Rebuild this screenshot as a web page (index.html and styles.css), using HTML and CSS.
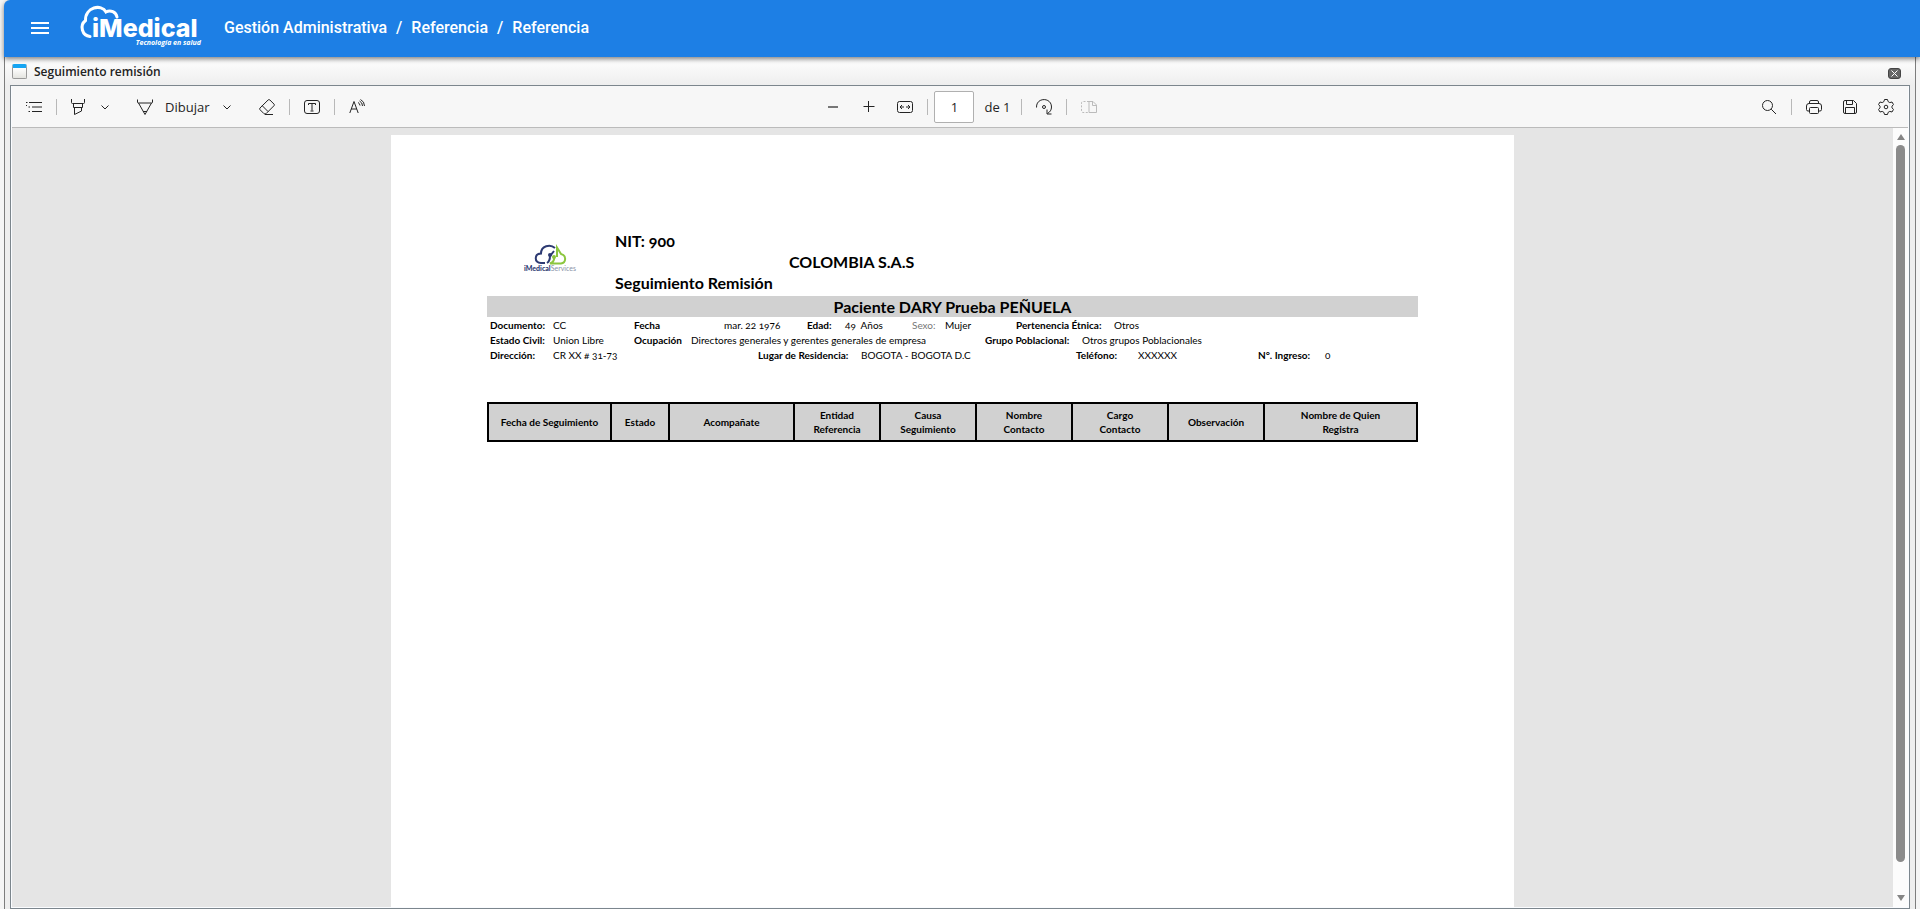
FILE: index.html
```html
<!DOCTYPE html>
<html lang="es">
<head>
<meta charset="utf-8">
<title>iMedical - Referencia</title>
<link rel="stylesheet" href="styles.css">
</head>
<body>
<header class="header">
<button class="menu" aria-label="Menú"><svg width="18" height="12" viewBox="0 0 18 12"><path d="M0 1h18M0 6h18M0 11h18"/></svg></button>
<a class="logo" href="#" aria-label="iMedical">
<svg width="122" height="33" viewBox="0 0 122 33">
<path class="cloud" d="M11 31.500A9 9 0 0 1 6.500 15.500C6 2 22.500-1.500 27 7C31.500 4.500 37 7 38 12"/>
<text class="logo-name" x="13" y="32">iMedical</text>
</svg>
<span class="logo-tag">Tecnología en salud</span>
</a>
<nav class="crumbs"><a href="#">Gestión Administrativa</a><span>/</span><a href="#">Referencia</a><span>/</span><a href="#">Referencia</a></nav>
</header>
<main class="window">
<div class="titlebar">
<span class="win-icon"></span>
<h1>Seguimiento remisión</h1>
<button class="close" aria-label="Cerrar"><svg width="7" height="7" viewBox="0 0 7 7"><path d="M.5.500l6 6M6.500.500l-6 6"/></svg></button>
</div>
<div class="viewer">
<div class="toolbar">
<div class="tools">
<button aria-label="Contenido"><svg width="16" height="16" viewBox="0 0 16 16"><path d="M3 3.500h13M6 8h10M6 12.500h10"/><path class="dots" d="M0 3.500h1.500M2.500 8H4M2.500 12.500H4M0 6.500h1"/></svg></button>
<i class="sep"></i>
<button aria-label="Resaltar"><svg width="16" height="16" viewBox="0 0 16 16"><path d="M.5 0v3.500q0 1 1 1h11q1 0 1-1V0M2.500 4.500v4h9v-4M3.500 8.500V15.500l7-3.500V8.500"/></svg></button>
<button aria-label="Opciones de resaltado"><svg width="8" height="16" viewBox="0 0 8 16"><path d="M.5 6.500L4 10l3.500-3.500"/></svg></button>
<button class="draw"><svg width="16" height="16" viewBox="0 0 16 16"><path d="M.5.500v2.500q0 1 1 1h13q1 0 1-1V.5M1.500 4L8 15.500 14.500 4M6 12.500h4"/></svg><span>Dibujar</span></button>
<button aria-label="Opciones de dibujo"><svg width="8" height="16" viewBox="0 0 8 16"><path d="M.5 6.500L4 10l3.500-3.500"/></svg></button>
<button class="eraser" aria-label="Borrar"><svg width="16" height="16" viewBox="0 0 16 16"><path d="M1 9L9.200.900q.8-.7 1.600 0l4.200 4.200q.8.800 0 1.600L7 14.700q-1 .8-2 0L1 10.700q-.8-.8 0-1.700zM3.300 6.800l5.800 5.800M6 15.500h8"/></svg></button>
<i class="sep"></i>
<button aria-label="Agregar texto"><svg width="16" height="16" viewBox="0 0 16 16"><rect x=".5" y="1.500" width="15" height="13" rx="2.500"/><path d="M4.500 6V4.500h7V6M8 4.500v7M6.500 12h3"/></svg></button>
<i class="sep"></i>
<button aria-label="Leer en voz alta"><svg width="16" height="16" viewBox="0 0 16 16"><path d="M.8 14L5 2.500 9.200 14M2.200 10h5.600M9 3.500q1.800.8 2 3M10.500 2q3 1.500 3 5M11.500.500q4 2 4 6.500"/></svg></button>
</div>
<div class="pages">
<button aria-label="Alejar"><svg width="16" height="16" viewBox="0 0 16 16"><path class="minus" d="M3 8h10"/></svg></button>
<button class="zoom" aria-label="Acercar"><svg width="16" height="16" viewBox="0 0 16 16"><path d="M2.500 7.500h11M7.500 2v11"/></svg></button>
<button class="zoom" aria-label="Ajustar al ancho"><svg width="16" height="16" viewBox="0 0 16 16"><rect x=".5" y="2.500" width="15" height="11" rx="2"/><path d="M3 8h4M9 8h4M5 6L3 8l2 2M11 6l2 2-2 2"/></svg></button>
<i class="sep"></i>
<input class="page-num" id="page" type="text" value="1"><label for="page">de 1</label>
<i class="sep"></i>
<button aria-label="Girar"><svg width="16" height="16" viewBox="0 0 16 16"><path d="M.5 8.500C0-2 15.500-2 15.500 8c0 3-1.500 5-4 6.500M11 10.500v4.500h4.500"/><circle cx="8" cy="8" r="1.500"/></svg></button>
<i class="sep"></i>
<button class="off" aria-label="Vista de página" disabled><svg width="16" height="16" viewBox="0 0 16 16"><path d="M8 2.500h4l3.500 3.500v7.500H8zM11.500 2.500V6.500h4"/><path stroke-dasharray="2 1.500" d="M8 2.500H2q-1.500 0-1.500 1.500v8q0 1.500 1.500 1.500h6"/></svg></button>
</div>
<div class="actions">
<button aria-label="Buscar"><svg width="16" height="16" viewBox="0 0 16 16"><circle cx="6.500" cy="6.500" r="5"/><path d="M10.200 10.200L15 15"/></svg></button>
<i class="sep"></i>
<button aria-label="Imprimir"><svg width="16" height="16" viewBox="0 0 16 16"><path d="M3.500 4.500V3q0-1.500 1.500-1.500h6q1.500 0 1.500 1.500v1.500M3.500 12H2Q.5 12 .5 10.500V7Q.5 4.500 3 4.500h10q2.500 0 2.500 2.500v3.500Q15.500 12 14 12h-1.500"/><rect x="3.500" y="8.500" width="9" height="6" rx="1"/></svg></button>
<button class="save" aria-label="Guardar"><svg width="16" height="16" viewBox="0 0 16 16"><path d="M3 1.500h8.500l3 3v8.500q0 1.500-1.500 1.500H3q-1.500 0-1.500-1.500V3Q1.500 1.500 3 1.500zM4.500 1.500v4h6v-4M3.500 14.500v-6h9v6"/></svg></button>
<button class="save" aria-label="Configuración"><svg width="16" height="16" viewBox="0 0 16 16"><path d="M6.500.500h3l.6 2.100 1.700 1 2.200-.6 1.500 2.600L14 7.100v1.800l1.500 1.500L14 13l-2.200-.6-1.700 1-.6 2.100h-3l-.6-2.100-1.700-1L2 13 .500 10.400 2 8.900V7.100L.5 5.600 2 3l2.200.6 1.700-1z"/><circle cx="8" cy="8" r="1.800"/></svg></button>
</div>
</div>
<div class="canvas">
<div class="scroll-area">
<article class="sheet">
<div class="doc-head">
<svg class="doc-logo" width="54" height="30" viewBox="0 0 54 30">
<path class="navy" d="M21 20h-4C10 19.500 10 11 17 10.500 17 3 26 .5 31 5M23 20q3-2 3-7l4-5"/>
<path class="green" d="M33 14V4.500L37 11c6 1.500 5 9 0 9.500H26q5-2 4-7"/>
<circle class="dot-navy" cx="26" cy="12" r="2"/><circle class="dot-green" cx="30" cy="14" r="2"/>
<text x="0" y="28"><tspan class="strong">iMedical</tspan>Services</text>
</svg>
<div class="doc-titles">
<h2>NIT: 900</h2>
<h2 class="company">COLOMBIA S.A.S</h2>
<h2>Seguimiento Remisión</h2>
</div>
</div>
<h2 class="patient">Paciente DARY Prueba PEÑUELA</h2>
<dl class="row row-a">
<dt>Documento:</dt><dd>CC</dd>
<dt>Fecha</dt><dd>mar. 22 1976</dd>
<dt>Edad:</dt><dd>49&nbsp; Años</dd>
<dt class="light">Sexo:</dt><dd>Mujer</dd>
<dt>Pertenencia Étnica:</dt><dd>Otros</dd>
</dl>
<dl class="row row-b">
<dt>Estado Civil:</dt><dd>Union Libre</dd>
<dt>Ocupación</dt><dd>Directores generales y gerentes generales de empresa</dd>
<dt>Grupo Poblacional:</dt><dd>Otros grupos Poblacionales</dd>
</dl>
<dl class="row row-c">
<dt>Dirección:</dt><dd>CR XX # 31-73</dd>
<dt>Lugar de Residencia:</dt><dd>BOGOTA - BOGOTA D.C</dd>
<dt>Teléfono:</dt><dd>XXXXXX</dd>
<dt>N°. Ingreso:</dt><dd>0</dd>
</dl>
<table class="follow">
<colgroup><col class="c-first"><col class="c-state"><col class="c-comp"><col class="c-ent"><col class="c-std"><col class="c-std"><col class="c-std"><col class="c-std"><col></colgroup>
<thead><tr>
<th>Fecha de Seguimiento</th><th>Estado</th><th>Acompañate</th><th>Entidad<br>Referencia</th><th>Causa<br>Seguimiento</th><th>Nombre<br>Contacto</th><th>Cargo<br>Contacto</th><th>Observación</th><th>Nombre de Quien<br>Registra</th>
</tr></thead>
</table>
</article>
</div>
<div class="scrollbar">
<span class="arrow up"></span>
<span class="thumb"></span>
<span class="arrow down"></span>
</div>
</div>
</div>
</main>
</body>
</html>
```

FILE: styles.css
```css
*{box-sizing:border-box}
body{margin:0;height:100vh;display:flex;flex-direction:column;background:#f5f5f5;overflow:hidden;font-family:"Open Sans",sans-serif;color:#242424}
h1,h2,dl,dd{margin:0}
button{padding:0;border:0;background:none;color:inherit;font:inherit;display:flex;align-items:center}
a{color:inherit;text-decoration:none}
svg{display:block;fill:none;stroke:currentColor}

.header{flex:none;height:57px;margin-left:4px;padding-left:27px;display:flex;align-items:center;background:#1d7fe5;color:#fff;border-top-left-radius:6px;box-shadow:0 2px 5px rgba(0,0,0,.5);z-index:1}
.menu{padding-bottom:2px}
.menu svg{stroke-width:2}
.logo{display:flex;flex-direction:column;margin-left:30px;padding-bottom:4px}
.logo svg{overflow:visible}
.cloud{stroke-width:3;stroke-linecap:round}
.logo-name{fill:#fff;stroke:none;font:800 25px Inter,sans-serif}
.logo-tag{text-align:right;font:italic 700 7px/10px "Open Sans",sans-serif}
.crumbs{margin-left:23px;display:flex;gap:9px;font:500 16px Roboto,sans-serif;padding-bottom:2px}

.window{flex:1;min-height:0;display:flex;flex-direction:column;margin:0 4px;padding:0 5px;background:linear-gradient(#fff,#eee 28px);border:1px solid #7d7d7d;border-top:0;border-bottom:0}
.titlebar{flex:none;height:28px;display:flex;align-items:center;gap:7px;padding:0 9px 0 2px}
.titlebar h1{font-size:12px;font-weight:600;color:#222}
.win-icon{width:15px;height:15px;border:1px solid #999;border-top:4px solid #16a5f3;border-radius:2px;background:linear-gradient(#fff,#e4e4e0)}
.close{margin:4px 0 0 auto;width:13px;height:11px;justify-content:center;background:#666;border:1px solid #444;border-radius:3px;color:#fff}

.viewer{flex:1;min-height:0;display:flex;flex-direction:column;border:1px solid #7c868d;padding:0 1px 1px;background:#fafcff}
.toolbar{flex:none;height:42px;display:grid;grid-template-columns:1fr auto 1fr;align-items:center;background:#f7f7f7;border-bottom:1px solid #bbb;font-size:13px}
.tools,.pages,.actions{display:flex;align-items:center;gap:14px}
.tools{padding-left:14px}
.pages{padding-left:2px}
.actions{justify-content:flex-end;padding-right:14px}
.sep{width:1px;height:16px;background:#b8b8b8}
.draw{gap:12px;margin-left:14px}
.eraser{margin-left:14px}
.zoom{margin-left:6px}
.minus{stroke:#777;stroke-width:2}
.page-num{width:40px;height:32px;margin:0 -4px 0 -8px;border:1px solid #b0b0b0;border-radius:2px;background:#fff;text-align:center;font:13px "Open Sans",sans-serif;color:#242424}
.pages label{margin-right:-4px}
.off{color:#bbb}
.save{margin-left:6px}

.canvas{flex:1;min-height:0;display:flex;background:#e5e5e5}
.scroll-area{flex:1;display:flex;justify-content:center;padding-top:7px;overflow:hidden}
.scrollbar{width:15px;display:flex;flex-direction:column;align-items:center;gap:5px;padding:6px 0;background:#fcfcfc}
.thumb{flex:1;width:9px;margin-bottom:28px;border-radius:5px;background:#8b8b8b}
.arrow{border:4px solid transparent}
.up{border-top:0;border-bottom:6px solid #858585}
.down{border-bottom:0;border-top:6px solid #858585}

.sheet{width:1123px;padding:95px 96px;background:#fff;font-family:Lato,sans-serif;font-variant-numeric:oldstyle-nums;color:#000;min-height:794px}
.sheet h2{font-size:16px;line-height:21px}
.doc-head{display:flex;gap:37px;padding-left:37px}
.doc-logo{margin-top:13px;overflow:visible;stroke-width:2}
.doc-logo text{font-size:7px;fill:#8a93a8;stroke:none}
.doc-logo .strong{font-weight:900;fill:#2d3a72}
.navy{stroke:#2d3a72}
.green{stroke:#8cc63f}
.dot-navy{fill:#2d3a72;stroke:none}
.dot-green{fill:#8cc63f;stroke:none}
.doc-titles{flex:1;padding-bottom:3px}
.company{padding-left:174px}
.patient{background:#d1d1d1;text-align:center}
.row{display:grid;align-items:center;padding-left:3px;font-size:10px;line-height:15px;white-space:nowrap}
.row-a{padding-top:1px;grid-template-columns:63px 81px 90px 83px 38px 67px 33px 71px 98px 1fr}
.row-b{grid-template-columns:63px 81px 57px 294px 97px 1fr}
.row-c{grid-template-columns:63px 205px 103px 215px 62px 120px 67px 1fr}
dt{font-weight:700}
.light{font-weight:400;color:#777}
.follow{width:100%;margin-top:39px;table-layout:fixed;border-collapse:collapse;background:#d1d1d1}
.follow th{height:38px;padding:0;border:2px solid #000;font-size:10px;line-height:14px}
.c-first{width:123px}
.c-state{width:58px}
.c-comp{width:125px}
.c-ent{width:86px}
.c-std{width:96px}
```
